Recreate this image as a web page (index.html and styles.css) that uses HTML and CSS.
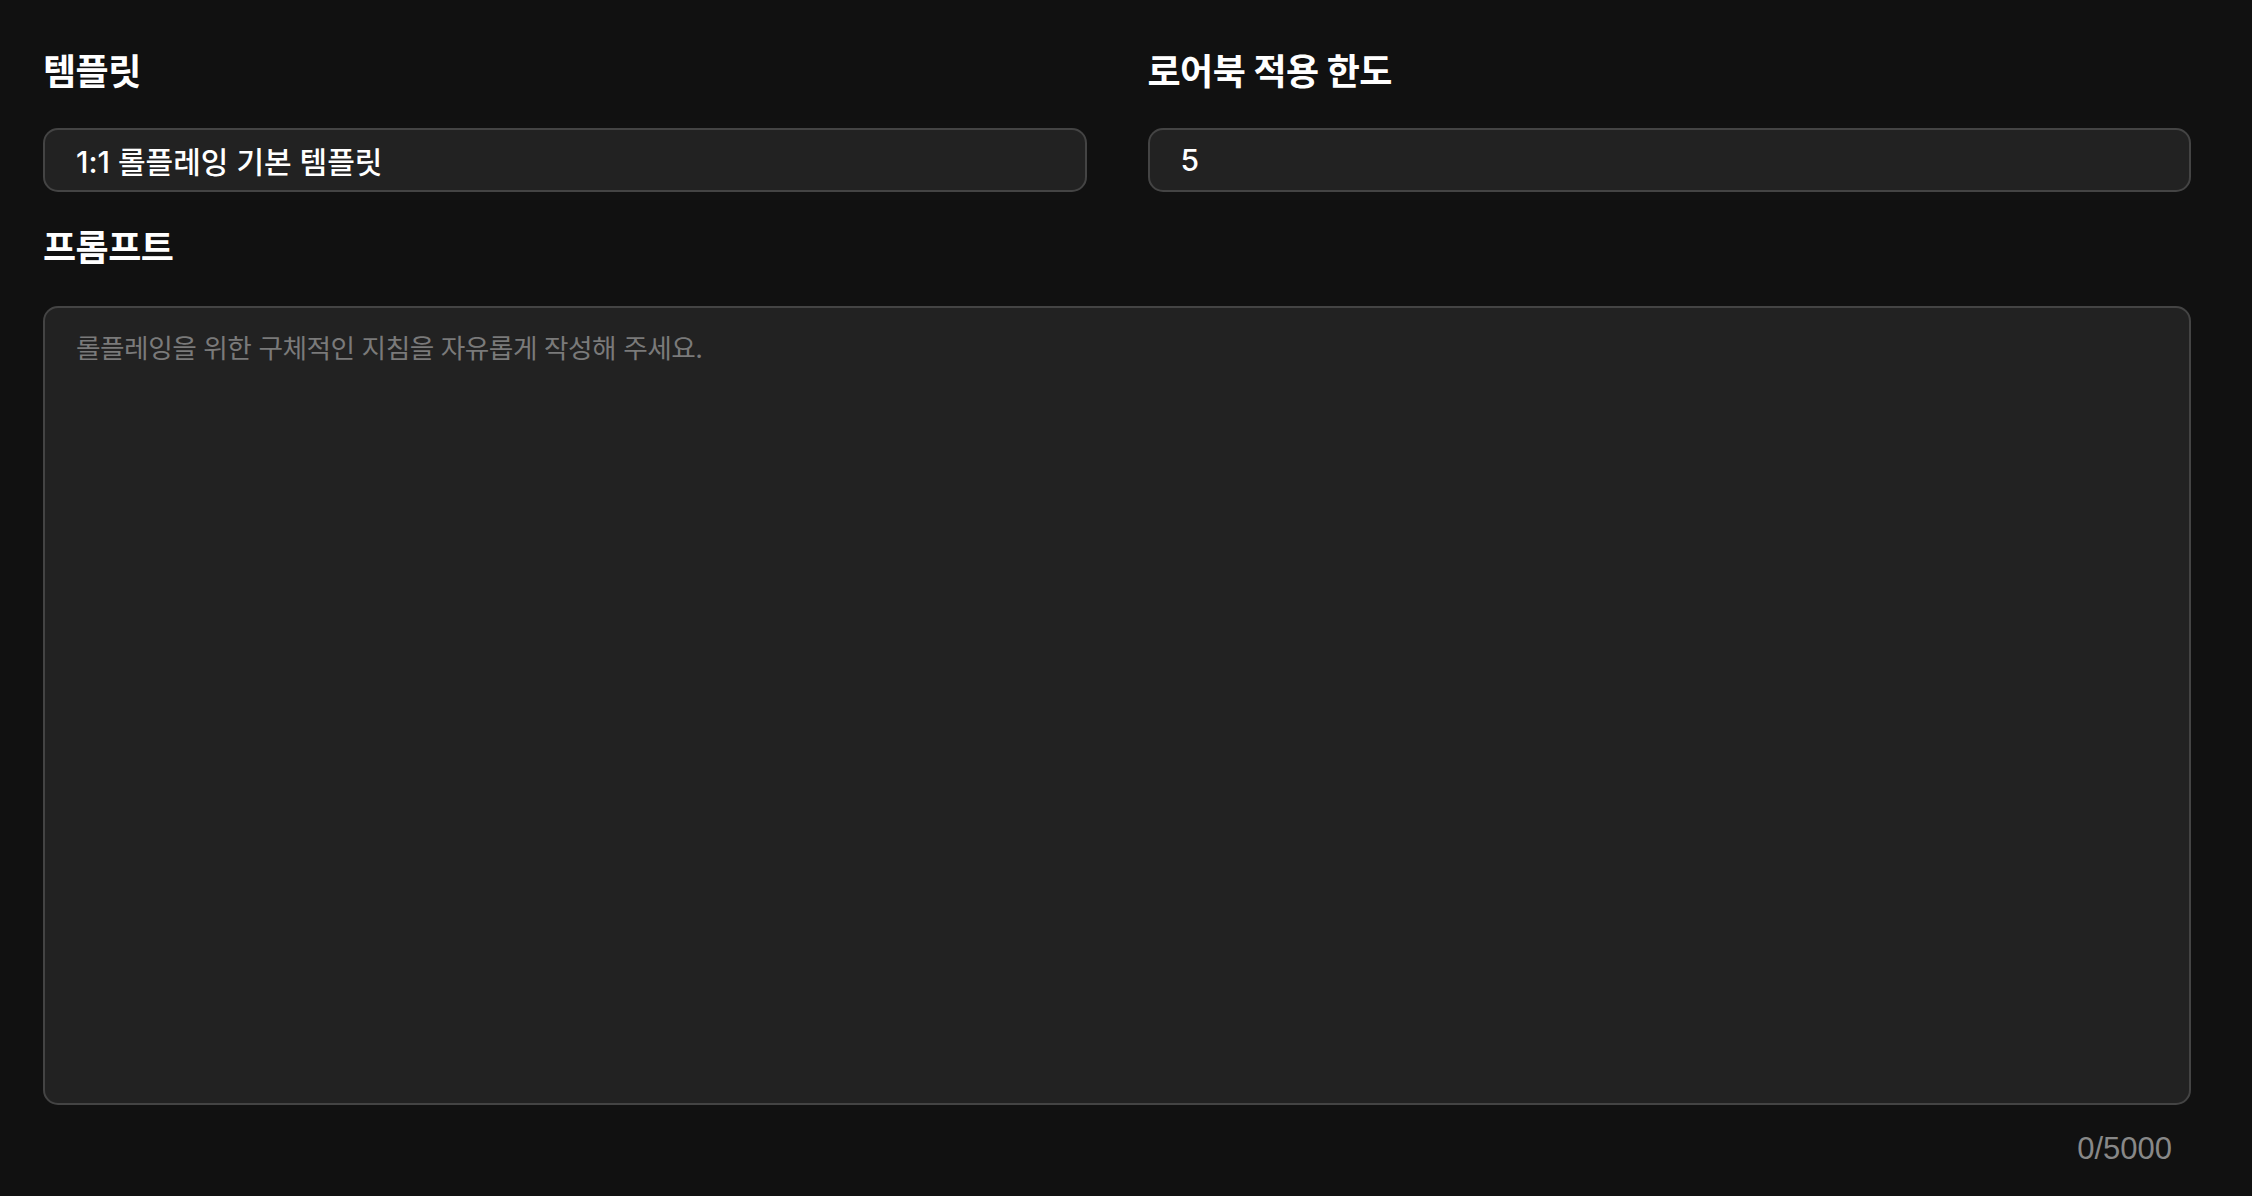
FILE: index.html
```html
<!DOCTYPE html>
<html lang="ko">
<head>
    <meta charset="UTF-8">
    <meta name="viewport" content="width=device-width, initial-scale=1.0">
    <title>프롬프트 설정</title>
    <link rel="stylesheet" href="styles.css">
</head>
<body>
    <div class="form">
        <div class="row">
            <div class="field">
                <label for="template">템플릿</label>
                <input type="text" id="template" value="1:1 롤플레잉 기본 템플릿">
            </div>
            <div class="field">
                <label for="lorebook">로어북 적용 한도</label>
                <input type="text" id="lorebook" value="5">
            </div>
        </div>

        <div class="field prompt-field">
            <label for="prompt">프롬프트</label>
            <textarea id="prompt" maxlength="5000" placeholder="롤플레잉을 위한 구체적인 지침을 자유롭게 작성해 주세요."></textarea>
            <div class="counter" id="counter">0/5000</div>
        </div>
    </div>

    <script>
        const prompt = document.getElementById('prompt');
        const counter = document.getElementById('counter');

        prompt.addEventListener('input', () => {
            counter.textContent = `${prompt.value.length}/5000`;
        });
    </script>
</body>
</html>
```

FILE: styles.css
```css
body {
    margin: 0;
    padding: 53px 61px 0 43px;
    background-color: #111111;
    color: #ffffff;
    font-family: Inter, "Noto Sans CJK KR", sans-serif;
}
.form {
    display: flex;
    flex-direction: column;
    gap: 37px;
}
.row {
    display: grid;
    grid-template-columns: 1fr 1fr;
    gap: 61px;
}
.field {
    display: flex;
    flex-direction: column;
}
.field label {
    font-size: 36px;
    font-weight: 700;
    line-height: 38px;
    margin-bottom: 37px;
    letter-spacing: -0.5px;
}
.prompt-field label {
    margin-bottom: 39px;
}
input {
    box-sizing: border-box;
    height: 64px;
    padding: 0 31px;
    background-color: #222222;
    border: 2px solid #444444;
    border-radius: 15px;
    color: #ffffff;
    font-family: Inter, "Noto Sans CJK KR", sans-serif;
    font-size: 30px;
    font-weight: 500;
    outline: none;
}
textarea {
    box-sizing: border-box;
    height: 799px;
    padding: 21px 31px;
    background-color: #222222;
    border: 2px solid #444444;
    border-radius: 15px;
    color: #ffffff;
    font-family: Inter, "Noto Sans CJK KR", sans-serif;
    font-size: 26.7px;
    line-height: 38px;
    resize: none;
    outline: none;
}
textarea::placeholder {
    color: #7a7a7a;
    letter-spacing: -0.5px;
}
.counter {
    align-self: flex-end;
    margin-top: 26px;
    margin-right: 19px;
    font-family: "Liberation Sans", Arial, sans-serif;
    font-size: 31px;
    line-height: 36px;
    color: #888888;
}
```
